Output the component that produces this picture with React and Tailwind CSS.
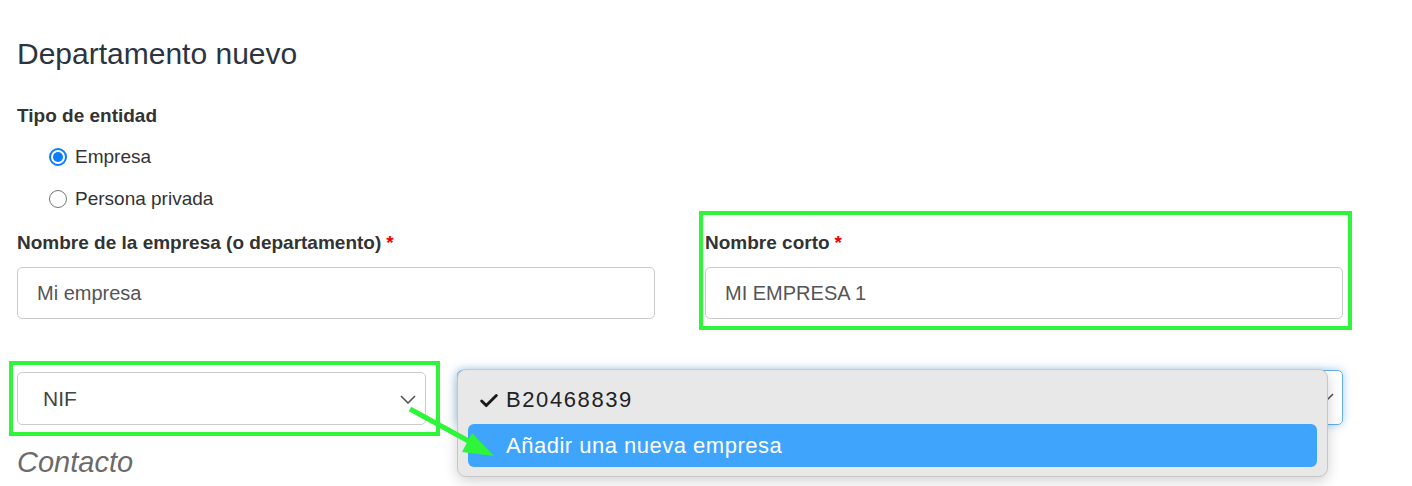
import { Check } from 'lucide-react';

const Chevron = ({ className }) => (
  <svg className={className} width="16" height="9" viewBox="0 0 16 9" fill="none">
    <polyline points="1,1 8,8 15,1" stroke="#555" strokeWidth="1.6" />
  </svg>
);

const Radio = ({ checked, label }) => (
  <label className="flex items-center h-[42px] pl-[32px] gap-[8px] text-[19px] text-[#333]">
    {checked ? (
      <span className="w-[18px] h-[18px] rounded-full border-[2px] border-[#0b7bff] flex items-center justify-center">
        <span className="w-[10px] h-[10px] rounded-full bg-[#0b7bff]" />
      </span>
    ) : (
      <span className="w-[18px] h-[18px] rounded-full border border-[#767676] bg-white" />
    )}
    <span>{label}</span>
  </label>
);

const FieldLabel = ({ children, required }) => (
  <div className="text-[19px] leading-[24px] font-bold text-[#333]">
    {children}
    {required && <span className="text-[#e00] ml-[5px]">*</span>}
  </div>
);

export default function App() {
  return (
    <div className="relative min-h-[486px] bg-white px-[17px] pt-[37px] font-['Liberation_Sans',Arial,sans-serif]">
      <h1 className="text-[30px] leading-[34px] text-[#2b3440]">Departamento nuevo</h1>

      <div className="mt-[33px]">
        <FieldLabel>Tipo de entidad</FieldLabel>
      </div>
      <div className="mt-[8px]">
        <Radio checked label="Empresa" />
        <Radio label="Persona privada" />
      </div>

      {/* Nombres */}
      <div className="mt-[11px] grid grid-cols-[638px_638px] gap-x-[50px]">
        <div>
          <FieldLabel required>Nombre de la empresa (o departamento)</FieldLabel>
          <div className="mt-[12px] h-[52px] border border-[#ccc] rounded-[5px] px-[19px] flex items-center text-[20px] text-[#555]">
            Mi empresa
          </div>
        </div>
        <div className="relative">
          <FieldLabel required>Nombre corto</FieldLabel>
          <div className="mt-[12px] h-[52px] border border-[#ccc] rounded-[5px] px-[19px] flex items-center text-[20px] text-[#555]">
            MI EMPRESA 1
          </div>
          <div className="absolute -left-[6px] -right-[9px] -top-[20px] -bottom-[11px] border-[4px] border-[#2ef53a] pointer-events-none" />
        </div>
      </div>

      {/* Documento */}
      <div className="mt-[51px] flex items-start gap-[31px] w-[1326px]">
        <div className="relative w-[409px] mt-[2px]">
          <div className="h-[53px] border border-[#ccc] rounded-[5px] pl-[25px] pr-[9px] flex items-center justify-between text-[21px] text-[#444]">
            <span>NIF</span>
            <Chevron className="mt-[2px]" />
          </div>
          <div className="absolute -left-[8px] -right-[14px] -top-[11px] -bottom-[11px] border-[4px] border-[#2ef53a] pointer-events-none" />
        </div>
        <div className="relative flex-1">
          <div className="h-[55px] border border-[#66afe9] rounded-[5px] shadow-[0_0_10px_rgba(102,175,233,0.6)] flex items-center justify-end pr-[8px]">
            <Chevron />
          </div>

          {/* menú desplegable */}
          <div className="absolute left-0 -top-[1px] w-[871px] h-[108px] bg-[#e8e8e8] border border-[#c6c6c6] rounded-[9px] shadow-[0_4px_14px_rgba(0,0,0,0.18)] px-[10px] pt-[8px] pb-[10px] text-[22px] tracking-[0.5px]">
            <div className="h-[43px] flex items-center text-[#222] relative pl-[38px] tracking-[1.6px]">
              <Check className="absolute left-[10px] top-[12px]" size={22} strokeWidth={3.2} color="#1a1a1a" />
              B20468839
            </div>
            <div className="mt-[3px] h-[43px] flex items-center bg-[#3fa4fb] rounded-[6px] text-white pl-[38px]">
              Añadir una nueva empresa
            </div>
          </div>
        </div>
      </div>

      <div className="mt-[21px] text-[29px] leading-[32px] italic text-[#6b6b6b]">Contacto</div>

      {/* flecha */}
      <svg className="absolute left-0 top-0 pointer-events-none" width="1412" height="486">
        <line x1="410" y1="409" x2="474" y2="444" stroke="#2ef53a" strokeWidth="5" />
        <polygon points="494,456 472,433 462,452" fill="#2ef53a" />
      </svg>
    </div>
  );
}
